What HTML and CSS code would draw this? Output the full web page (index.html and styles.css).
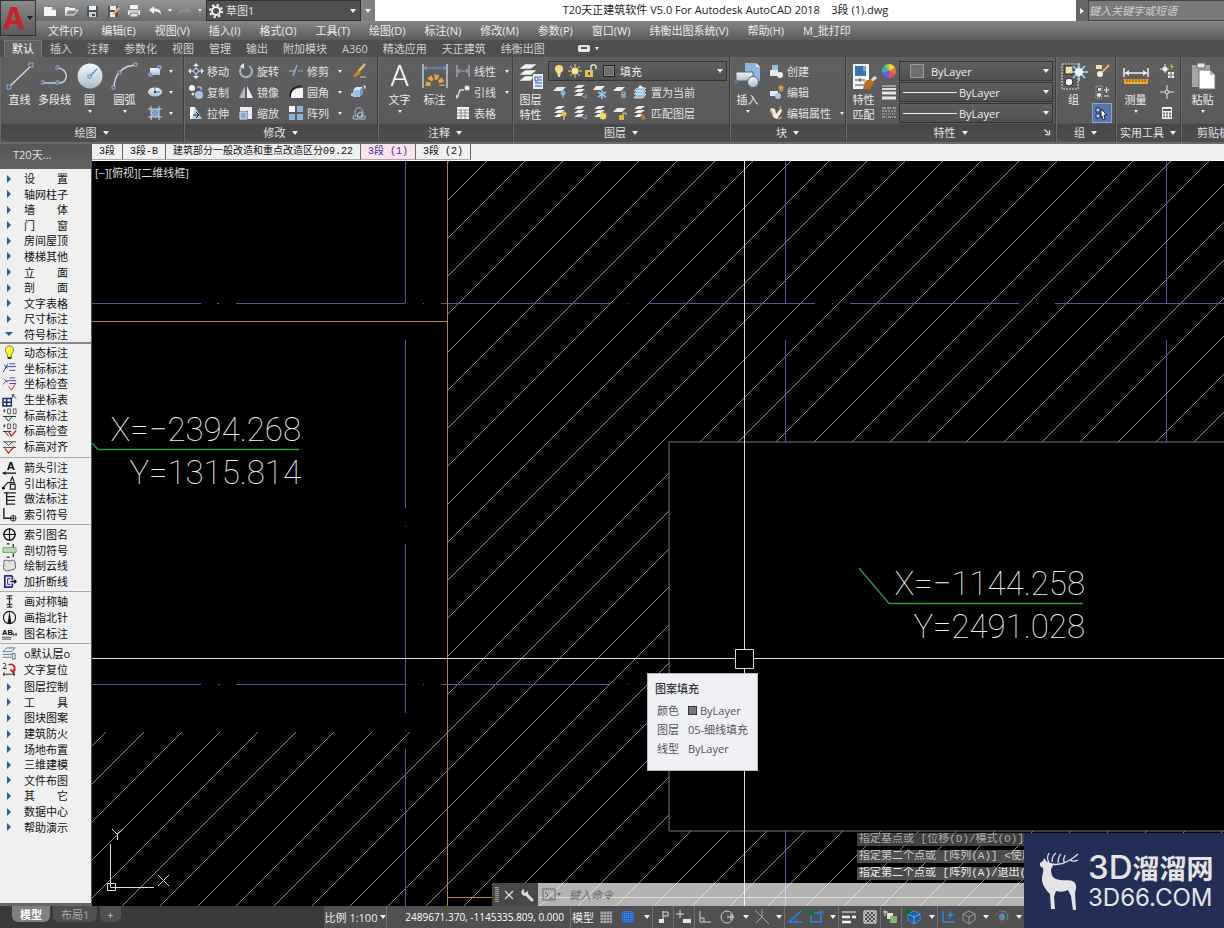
FILE: index.html
```html
<!DOCTYPE html>
<html lang="zh-CN">
<head>
<meta charset="utf-8">
<title>T20天正建筑软件 V5.0 For Autodesk AutoCAD 2018</title>
<link rel="stylesheet" href="styles.css">
</head>
<body>
<svg class="defs" aria-hidden="true">
  <defs>
    <linearGradient id="gb" x1="0" y1="0" x2="0" y2="1"><stop offset="0" stop-color="#f4f8fb"/><stop offset="1" stop-color="#a9bccd"/></linearGradient>
    <symbol id="new" viewBox="0 0 16 16"><path d="M2 4h8l4 3v6H2z" fill="#f3f3f3"/><path d="M10 4v3h4z" fill="#9b9b9b"/></symbol>
    <symbol id="open" viewBox="0 0 16 16"><path d="M2 12V4h4l1 1h5v2H5z" fill="#eee"/><path d="M2 12l3-5h10l-4 5z" fill="#7c8a92" stroke="#eee"/></symbol>
    <symbol id="save" viewBox="0 0 16 16"><path d="M3 3h11v11H3z" fill="#4d565e"/><path d="M5 3h7v4H5z" fill="#f4f4f4"/><path d="M5 9h7v5H5z" fill="#c6d0d8"/><path d="M8 11h3v2H8z" fill="#38424a"/></symbol>
    <symbol id="saveas" viewBox="0 0 16 16"><path d="M3 3h10v11H3z" fill="#4d565e"/><path d="M5 3h6v4H5zM5 9h5v5H5z" fill="#eee"/><path d="M7 11l6-7 2 2-6 6z" fill="#e6ad62"/></symbol>
    <symbol id="print" viewBox="0 0 16 16"><path d="M4 2h8v4H4zM2 7h12v5H2z" fill="#f5f5f5"/><path d="M4 10h8v4H4z" fill="#dce3e8" stroke="#69727a"/><path d="M1 8h14" stroke="#aaa"/></symbol>
    <symbol id="undo" viewBox="0 0 16 16"><path d="M2 7l5-4v2.500c5 0 7 2 7 6-2-3-4-3-7-3V11z" fill="#f0f0f0"/></symbol>
    <symbol id="redo" viewBox="0 0 16 16"><path d="M14 7L9 3v2.500c-5 0-7 2-7 6 2-3 4-3 7-3V11z" fill="#8e8e8e"/></symbol>
    <symbol id="gear" viewBox="0 0 16 16"><circle cx="8" cy="8" r="4" fill="none" stroke="#f2f2f2" stroke-width="2"/><circle cx="8" cy="8" r="6" fill="none" stroke="#f2f2f2" stroke-width="2" stroke-dasharray="2.300 2.400"/></symbol>

    <symbol id="line" viewBox="0 0 28 28"><path d="M3 25L26 3" stroke="#d5d5d5" stroke-width="1.500"/><path d="M1 23h4v4H1zM23 1h4v4h-4z" fill="#4b5d73" stroke="#8ab4e0"/></symbol>
    <symbol id="pline" viewBox="0 0 28 28"><path d="M2 21h16c10 0 10-15-2-15" stroke="#c9ced4" fill="none" stroke-width="1.500"/><path d="M0 19h3v3H0zM15 19h3v3h-3zM15 4h3v3h-3z" fill="#4b5d73" stroke="#8ab4e0"/></symbol>
    <symbol id="circle" viewBox="0 0 28 28"><circle cx="14" cy="14" r="12.500" fill="url(#gb)"/><path d="M14 14l7-7" stroke="#5d8dc0" stroke-width="1.500"/><path d="M12 13h3v3h-3z" fill="#cfe2f5" stroke="#5d8dc0"/></symbol>
    <symbol id="arc" viewBox="0 0 28 28"><path d="M3 26C3 12 12 3 26 3" stroke="#d5d5d5" fill="none" stroke-width="1.500"/><path d="M1 24h3v3H1zM7 9h3v3H7zM23 1h3v3h-3z" fill="#4b5d73" stroke="#8ab4e0"/></symbol>
    <symbol id="rect" viewBox="0 0 16 16"><path d="M3 5h10v7H3z" fill="url(#gb)"/><path d="M11 3h3v3h-3zM2 10h3v3H2z" fill="#4d6f97" stroke="#9cc3ec"/></symbol>
    <symbol id="ellipse" viewBox="0 0 16 16"><ellipse cx="8" cy="8" rx="7" ry="4.500" fill="url(#gb)"/><path d="M8 8V2M8 8h5" stroke="#4d6f97"/><path d="M7 7h2v2H7z" fill="#27486e"/></symbol>
    <symbol id="hatch" viewBox="0 0 16 16"><path d="M4 4h8v8H4z" fill="#6c94c3"/><path d="M4 1v14M12 1v14M1 4h14M1 12h14" stroke="#c6d8eb"/><path d="M4 12l8-8M4 8l4-4M8 12l4-4" stroke="#cfe2f5" stroke-width=".6"/></symbol>
    <symbol id="move" viewBox="0 0 16 16"><path d="M8 0l3 3H5zM8 16l3-3H5zM0 8l3-3v6zM16 8l-3-3v6z" fill="#e4e9ee"/><path d="M8 3v10M3 8h10" stroke="#e4e9ee"/><path d="M6 6h4v4H6z" fill="#3d5068" stroke="#a8c9ec"/></symbol>
    <symbol id="copy" viewBox="0 0 16 16"><circle cx="4" cy="4" r="3" fill="#f2f2f2"/><circle cx="11" cy="11" r="4" fill="#a8c4e0"/><path d="M9 3h4v3" stroke="#ddd" fill="none"/><circle cx="5" cy="10" r="1.500" fill="#ddd"/></symbol>
    <symbol id="stretch" viewBox="0 0 16 16"><path d="M2 2h5v12H2z" fill="#fff"/><path d="M7 2l7 12H4z" fill="#b3cbe2"/><path d="M5 10h6M8 7l3 3-3 3" stroke="#222" fill="none"/></symbol>
    <symbol id="rotate" viewBox="0 0 16 16"><path d="M5 3a6 6 0 1 0 6 0" stroke="#9fb4c9" fill="none" stroke-width="2"/><path d="M6 0v6L2 3z" fill="#dce6ef"/></symbol>
    <symbol id="mirror" viewBox="0 0 16 16"><path d="M7 2v12H1z" fill="#aab9c9"/><path d="M9 2v12h6z" fill="#e9eef3"/></symbol>
    <symbol id="scale" viewBox="0 0 16 16"><path d="M2 2h12v12h-4V6H2z" fill="#e8edf3"/><path d="M2 7h7v7H2z" fill="#83a8d2" stroke="#dfe8f2"/></symbol>
    <symbol id="trim" viewBox="0 0 16 16"><path d="M1 8h6M10 8h2M13 8h2" stroke="#aebdcc"/><path d="M5 13L9 2" stroke="#8fb1d8" stroke-width="1.500"/></symbol>
    <symbol id="fillet" viewBox="0 0 16 16"><path d="M3 14V12Q3 4 13 4H15V14z" fill="#f3f5f7"/><path d="M2 13Q2 3 13 2" stroke="#151a20" stroke-width="1.500" fill="none"/></symbol>
    <symbol id="array" viewBox="0 0 16 16"><path d="M1 1h6v6H1z" fill="#f3f6f9"/><path d="M9 1h6v6H9zM1 9h6v6H1zM9 9h6v6H9z" fill="#8fb4dc"/></symbol>
    <symbol id="erase" viewBox="0 0 16 16"><path d="M14 1L7 9" stroke="#e8b45c" stroke-width="2.500"/><path d="M7 7l3 3-5 4-3-1z" fill="#db7d23"/><path d="M9 14h6" stroke="#e9c9a3"/></symbol>
    <symbol id="explode" viewBox="0 0 16 16"><path d="M2 6h7v7H2z" fill="#9dbfe0"/><path d="M2 6l3-3h7L9 6z" fill="#d6e5f4"/><path d="M9 6l3-3v7l-3 3z" fill="#6f9ac8"/><path d="M12 1l3 1-1 4zM0 9h2v3H0z" fill="#b9d2eb"/></symbol>
    <symbol id="offset" viewBox="0 0 16 16"><path d="M2 14h12v-3h-3c3-5-1-9-4-8-3 0-4 5-2 8H2z" stroke="#a6c3e2" fill="none"/><path d="M6 12h5V9c1-2-3-3-4 0z" stroke="#dce8f5" fill="none"/></symbol>
    <symbol id="dim" viewBox="0 0 28 28"><path d="M2 2v24M26 2v24" stroke="#c6cbd1" stroke-width="1.500"/><path d="M3 6h22M6 4L3 6l3 2M22 4l3 2-3 2" stroke="#6aa0dc" fill="none"/><path d="M7 24c0-12 14-12 14 0" fill="none" stroke="#e2a647" stroke-width="5" stroke-dasharray="4 2"/></symbol>
    <symbol id="dimlin" viewBox="0 0 16 16"><path d="M2 2v12M14 2v12" stroke="#c6cbd1"/><path d="M3 8h10M5 6L3 8l2 2M11 6l2 2-2 2" stroke="#7fb0e6" fill="none"/></symbol>
    <symbol id="leader" viewBox="0 0 16 16"><path d="M2 14L5 6h4" stroke="#d9d9d9" fill="none" stroke-width="1.500"/><path d="M1 15l0-4 3 1z" fill="#ddd"/><circle cx="12" cy="4" r="2.500" fill="#eef2f6"/></symbol>
    <symbol id="table" viewBox="0 0 16 16"><path d="M2 2h12v12H2z" fill="#f5f5f5"/><path d="M2 5h12M2 8h12M2 11h12M6 5v9M10 5v9" stroke="#8b8f94"/></symbol>
    <symbol id="layers" viewBox="0 0 28 28"><path d="M8 2h12l-6 5H2zM8 8h12l-6 5H2zM8 14h9l-3 5H2z" fill="#f2f2f2" stroke="#555" stroke-width=".5"/><path d="M16 12h10v15H16z" fill="#e7f0fa"/><path d="M18 15h3v4h-3zM22 15h3M22 18h3M18 21h7M18 24h7" stroke="#2c5b99" fill="none"/></symbol>
    <symbol id="bulb" viewBox="0 0 16 16"><circle cx="8" cy="6" r="4" fill="#f5dc7c"/><path d="M6 9h4l-1 5H7z" fill="#ead9a3"/></symbol>
    <symbol id="sun" viewBox="0 0 16 16"><circle cx="8" cy="8" r="3.500" fill="#fbe795"/><path d="M8 1v3M8 12v3M1 8h3M12 8h3M3 3l2 2M11 11l2 2M13 3l-2 2M3 13l2-2" stroke="#e8cf90"/></symbol>
    <symbol id="lock" viewBox="0 0 16 16"><path d="M2 7h8v7H2z" fill="#e6c25c"/><path d="M8 7V4c0-3 5-3 5 0v2" stroke="#ddd" fill="none" stroke-width="1.500"/><path d="M5 9h2v3H5z" fill="#6d5a20"/></symbol>
    <symbol id="lay1" viewBox="0 0 16 16"><path d="M5 3h9l-4 4H1z" fill="#ececec"/><circle cx="11" cy="9" r="2.500" fill="#80b4ea"/><path d="M11 11v3" stroke="#bcd"/></symbol>
    <symbol id="lay2" viewBox="0 0 16 16"><path d="M6 1h7l-4 3H2zM6 5h7l-4 3H2zM6 9h6l-3 3H2z" fill="#e6ebf0"/><path d="M10 12l4 2M14 10v4" stroke="#7fb0e6"/></symbol>
    <symbol id="lay3" viewBox="0 0 16 16"><path d="M4 2h9l-4 4H1z" fill="#ececec"/><path d="M10 6v9M6 8l8 5M14 8l-8 5" stroke="#94c6f5" stroke-width="1.500"/></symbol>
    <symbol id="lay4" viewBox="0 0 16 16"><path d="M5 3h8l-4 4H1z" fill="#ececec"/><path d="M9 10h5v4H9z" fill="#7aa7a0"/><path d="M10 10V8h3v2" stroke="#a7c9c3" fill="none"/></symbol>
    <symbol id="lay5" viewBox="0 0 16 16"><path d="M5 4h9l-3 3H2zM5 7h9l-3 3H2zM5 10h9l-3 4H2z" fill="#8fb8e2" stroke="#e9f1fa" stroke-width=".7"/><path d="M8 1l4 3H6z" fill="#e9f1fa"/></symbol>
    <symbol id="lay6" viewBox="0 0 16 16"><path d="M6 1h7l-4 3H2zM6 5h7l-4 3H2zM6 9h5l-3 3H2z" fill="#eee"/><circle cx="12" cy="9" r="2.500" fill="#edbd56"/><path d="M12 11v4" stroke="#eddcb0"/></symbol>
    <symbol id="lay7" viewBox="0 0 16 16"><path d="M6 1h7l-4 3H2zM6 5h7l-4 3H2zM6 9h5l-3 3H2z" fill="#eee"/><circle cx="11" cy="11" r="3" fill="#f2de62"/><path d="M11 7v8M7 11h8M8 8l6 6M14 8l-6 6" stroke="#f2de62"/></symbol>
    <symbol id="lay8" viewBox="0 0 16 16"><path d="M5 3h9l-4 4H1z" fill="#ececec"/><path d="M7 10h5v5H7z" fill="#e3b148"/><path d="M11 10V8h3v2" stroke="#e9d39a" fill="none"/></symbol>
    <symbol id="lay9" viewBox="0 0 16 16"><path d="M6 1h7l-4 3H2zM6 5h7l-4 3H2zM6 9h5l-3 3H2z" fill="#eee"/><path d="M9 9l3 1 2 4-4 1z" fill="#c9762c"/></symbol>
    <symbol id="insert" viewBox="0 0 28 28"><path d="M11 1h11l4 4v14H11z" fill="#8fb6df"/><path d="M22 1v4h4z" fill="#e3eefa"/><path d="M2 10h17v9H2z" fill="url(#gb)" stroke="#55606c"/><circle cx="19" cy="20" r="5.500" fill="url(#gb)" stroke="#55606c"/><path d="M0 18h4v4H0z" fill="#4e77a8"/></symbol>
    <symbol id="create" viewBox="0 0 16 16"><path d="M4 2h6v7H4z" fill="#9cbde0"/><path d="M2 7h8v6H2z" fill="#e6ebf0"/><circle cx="12" cy="12" r="3" fill="#eaf1f8"/></symbol>
    <symbol id="edit" viewBox="0 0 16 16"><path d="M2 7h8v5H2z" fill="#e6ebf0"/><circle cx="10" cy="12" r="3" fill="#a8c6e6"/><path d="M13 1v7M10 4h6M11 2l4 5M15 2l-4 5" stroke="#f0b050"/></symbol>
    <symbol id="attr" viewBox="0 0 16 16"><path d="M3 3l4 1 1 5 5-6 1 3-5 8-3-1-4-7z" fill="#f1eadb"/><path d="M2 4l3 6M10 14l4-2M11 3l2-1" stroke="#cf9d4d" stroke-width="1.500"/></symbol>
    <symbol id="match" viewBox="0 0 28 28"><path d="M3 2h16v25H3z" fill="#f1f5f9"/><path d="M5 4h11v10H5z" fill="#3776ad"/><path d="M13 4h3v5h-3z" fill="#74a8d3"/><path d="M5 18h10M10 16v4M5 23h9" stroke="#44484d"/><path d="M26 15l-5 4" stroke="#ddd" stroke-width="3"/><path d="M15 19l6-2 3 4-4 6-7 0z" fill="#b96c28"/></symbol>
    <symbol id="wheel" viewBox="0 0 16 16"><path d="M8 8V1a7 7 0 0 1 6 4z" fill="#ffcf39"/><path d="M8 8l6-3a7 7 0 0 1 0 7z" fill="#e87637"/><path d="M8 8l6 4a7 7 0 0 1-7 3z" fill="#d94a88"/><path d="M8 8l-1 7a7 7 0 0 1-6-5z" fill="#5b65cf"/><path d="M8 8l-7 2a7 7 0 0 1 2-7z" fill="#3ea6d4"/><path d="M8 8L3 3a7 7 0 0 1 5-2z" fill="#83cf55"/></symbol>
    <symbol id="weights" viewBox="0 0 16 16"><path d="M1 2h14" stroke="#ddd"/><path d="M1 5h14" stroke="#ddd" stroke-width="2"/><path d="M1 9h14M1 14h14" stroke="#e6e6e6" stroke-width="3"/></symbol>
    <symbol id="ltypes" viewBox="0 0 16 16"><path d="M1 3h14" stroke="#ccc" stroke-dasharray="4 1"/><path d="M1 6h14" stroke="#ccc" stroke-dasharray="2 1"/><path d="M1 9h14" stroke="#ccc" stroke-dasharray="1 1"/><path d="M1 12h14" stroke="#ccc" stroke-dasharray="3 1 1 1"/></symbol>
    <symbol id="group" viewBox="0 0 28 28"><path d="M2 2h16v25H2z" fill="none" stroke="#ddd" stroke-dasharray="2 1"/><path d="M5 4h8v8H5z" fill="#f0e39c" stroke="#222"/><circle cx="9" cy="20" r="4" fill="#f5f5f5" stroke="#222"/><path d="M19 1v18M10 10h18M13 4l12 12M25 4L13 16" stroke="#a9dcf5" stroke-width="1.500"/><circle cx="19" cy="10" r="4" fill="#eafaff"/></symbol>
    <symbol id="ungroup" viewBox="0 0 16 16"><path d="M2 2h6v4H2z" fill="#f2e3a6"/><circle cx="6" cy="11" r="3" fill="#eee"/><path d="M15 2L8 9" stroke="#e7ae62" stroke-width="2"/></symbol>
    <symbol id="gedit" viewBox="0 0 16 16"><path d="M2 2h6v12H2z" fill="none" stroke="#bbb" stroke-dasharray="1 1"/><path d="M4 4h3v3H4z" fill="#cfe0f0"/><circle cx="5" cy="11" r="2" fill="#eee"/><path d="M10 6h5M12.500 3v6M10 12h5" stroke="#e8e8e8"/></symbol>
    <symbol id="gsel" viewBox="0 0 16 16"><path d="M2 3h4v4H2zM2 9h4v4H2z" fill="#bcd0f0" stroke="#1b2c4c"/><path d="M7 4l6 6H10l1 4-2 1-1-4-1 1z" fill="#fff" stroke="#223"/></symbol>
    <symbol id="measure" viewBox="0 0 28 28"><path d="M2 6v9M26 6v9M3 11h22" stroke="#f0f0f0" stroke-width="1.500"/><path d="M7 8l-4 3 4 3zM21 8l4 3-4 3z" fill="#f0f0f0"/><path d="M2 17h24v5H2z" fill="#e5a92d"/><path d="M5 17v3M8 17v3M11 17v3M14 17v3M17 17v3M20 17v3M23 17v3" stroke="#7c5a12"/></symbol>
    <symbol id="qsel" viewBox="0 0 16 16"><path d="M1 6h9M6 1v9" stroke="#ddd"/><circle cx="6" cy="6" r="2.500" fill="#eee"/><path d="M13 0l-2 4h2l-1 3 3-4h-2z" fill="#f0b050"/><path d="M9 9h6v6H9z" fill="#eee"/><path d="M9 12h6M12 9v6" stroke="#666"/></symbol>
    <symbol id="point" viewBox="0 0 16 16"><path d="M8 1v14M1 8h14" stroke="#ddd"/><circle cx="8" cy="8" r="2" fill="#6a6a6a" stroke="#ddd"/></symbol>
    <symbol id="calc" viewBox="0 0 16 16"><path d="M3 2h10v12H3z" fill="#f0f0f0"/><path d="M4 4h8v2H4z" fill="#555"/><path d="M4 8.500h8M4 11.500h8" stroke="#777" stroke-width="2" stroke-dasharray="2 1"/></symbol>
    <symbol id="paste" viewBox="0 0 28 28"><path d="M3 3h18v22H3z" fill="#a5a5a5"/><path d="M8 1h8v5H8z" fill="#e6e6e6" stroke="#666"/><path d="M10 8h11l5 5v14H10z" fill="#fff" stroke="#777"/><path d="M21 8v5h5z" fill="#b4b4b4"/></symbol>

    <symbol id="t-bulb" viewBox="0 0 16 16"><path d="M6 10C2 6 4 1 8 1s6 5 2 9v3H6z" fill="#ffff3c" stroke="#777700"/><path d="M6 13h4v2H6z" fill="#333"/></symbol>
    <symbol id="t-coord" viewBox="0 0 16 16"><path d="M1 12l4-6h10M2 4l4 4M6 3L3 9M8 3h6M8 10h6" stroke="#3e3e9e" fill="none"/></symbol>
    <symbol id="t-coordc" viewBox="0 0 16 16"><path d="M1 9l4-4h10M2 3l4 4M8 2h6M8 8h6" stroke="#3e3e9e" fill="none"/><path d="M7 11l3 4 5-8" stroke="#d22" fill="none"/></symbol>
    <symbol id="t-coordt" viewBox="0 0 16 16"><path d="M1 7h9v8H1zM1 11h9M5 7v8" stroke="#12306e" fill="none" stroke-width="1.500"/><path d="M10 7l3-5M10 2l5 5" stroke="#222"/></symbol>
    <symbol id="t-elev" viewBox="0 0 16 16"><path d="M1 3h3M2.500 1v4M6 1h3v5H6zM12 1h3v5h-3z" stroke="#333" fill="none" stroke-width=".8"/><path d="M1 9h14M3 9l4 5 4-5" stroke="#222" fill="none"/></symbol>
    <symbol id="t-elevc" viewBox="0 0 16 16"><path d="M1 3h3M2.500 1v4M6 1h3v5H6zM12 1h3v5h-3z" stroke="#333" fill="none" stroke-width=".8"/><path d="M1 9h9M3 9l4 5" stroke="#222" fill="none"/><path d="M7 9l3 5 5-6" stroke="#d22" fill="none" stroke-width="1.500"/></symbol>
    <symbol id="t-align" viewBox="0 0 16 16"><path d="M1 3h14M1 9h14M3 3l4 4 4-4" stroke="#444" fill="none"/><path d="M3 10l4 5 6-7" stroke="#c22" fill="none" stroke-width="1.300"/></symbol>
    <symbol id="t-under" viewBox="0 0 16 16"><path d="M1 14h14" stroke="#222" stroke-width="1.500"/><path d="M4 12l-4 2 4 2z" fill="#222"/></symbol>
    <symbol id="t-lead" viewBox="0 0 16 16"><path d="M1 13l5-6h8M9 6l2-5 2 5M9 14V9h5v5z" stroke="#222" fill="none" stroke-width="1.300"/><circle cx="1.500" cy="13" r="1.500"/></symbol>
    <symbol id="t-method" viewBox="0 0 16 16"><path d="M5 1v14M2 2h13M5 6h9M5 10h9M5 14h9" stroke="#222" stroke-width="1.500"/></symbol>
    <symbol id="t-index" viewBox="0 0 16 16"><path d="M2 1v11h8" stroke="#222" fill="none" stroke-width="1.500"/><circle cx="12" cy="12" r="3" fill="none" stroke="#222"/><path d="M9 12h6M12 9v6" stroke="#222"/></symbol>
    <symbol id="t-idxname" viewBox="0 0 16 16"><circle cx="8" cy="8" r="6" fill="none" stroke="#111" stroke-width="1.500"/><path d="M1 8h14M8 1v14" stroke="#111" stroke-width="1.300"/></symbol>
    <symbol id="t-section" viewBox="0 0 16 16"><path d="M5 1h3M12 1v4M5 15h3M12 11v4" stroke="#222" stroke-width="1.300"/><path d="M1 5h14v5H1z" fill="#b8dcae" stroke="#6e9a66"/></symbol>
    <symbol id="t-cloud" viewBox="0 0 16 16"><path d="M2 3c3-2 5 1 7 0s5-1 5 2 1 4 0 6-3 1-5 2-4 1-6 0-1-4-1-6 0-3 0-4z" fill="#e6e0e2" stroke="#555"/></symbol>
    <symbol id="t-break" viewBox="0 0 16 16"><path d="M11 2H3v12h8M11 2v4M11 10v4" stroke="#24249a" fill="none" stroke-width="1.800"/><path d="M6 5h3M6 5v6h3" stroke="#24249a" fill="none"/><path d="M9 8h6M13 6l2 2-2 2" stroke="#111" fill="none" stroke-width="1.500"/></symbol>
    <symbol id="t-sym" viewBox="0 0 16 16"><path d="M8 2v12M5 2h6M5 5h6M5 11h6M5 14h6" stroke="#333" stroke-width="1.300"/></symbol>
    <symbol id="t-north" viewBox="0 0 16 16"><circle cx="8" cy="8" r="6.500" fill="none" stroke="#111" stroke-width="1.200"/><path d="M8 1l2 13H6z" fill="#111"/></symbol>
    <symbol id="t-rule" viewBox="0 0 16 16"><path d="M0 12h10M0 14h10M12 9h4M12 7v4M15 7v4" stroke="#222" stroke-width=".8"/></symbol>
    <symbol id="t-layer" viewBox="0 0 16 16"><path d="M5 2h9l-4 4H1zM1 9h9l2-2M1 12h9M11 8h3v6h-3z" stroke="#5b7786" fill="#e8eef0"/></symbol>
    <symbol id="t-reset" viewBox="0 0 16 16"><path d="M1 2c3-2 4 1 2 3L1 7h4" stroke="#222" fill="none"/><path d="M7 3c6-2 8 3 5 7M9 8l3 3 2-4" stroke="#d11f2a" fill="none" stroke-width="2"/><path d="M1 13h13M2 11v4M13 11v4" stroke="#222"/></symbol>

    <symbol id="s-grid" viewBox="0 0 16 16"><path d="M4 2v12M7 2v12M10 2v12M13 2v12M2 4h12M2 7h12M2 10h12M2 13h12" stroke="#d6d6d6" stroke-width=".8"/></symbol>
    <symbol id="s-snap" viewBox="0 0 16 16"><path d="M2 2h12v12H2z" fill="#2465c8"/><path d="M5 2v12M8 2v12M11 2v12M2 5h12M2 8h12M2 11h12" stroke="#5f92d9" stroke-dasharray="1 1"/></symbol>
    <symbol id="s-infer" viewBox="0 0 16 16"><path d="M8 2v9M8 3h5v4H8" stroke="#ddd" fill="none"/><path d="M4 10h5v4H4z" fill="#e5e5e5"/></symbol>
    <symbol id="s-dyn" viewBox="0 0 16 16"><path d="M4 1v8M0 5h8" stroke="#ddd"/><path d="M7 10h8v4H7z" fill="#e5e5e5"/></symbol>
    <symbol id="s-ortho" viewBox="0 0 16 16"><path d="M3 2v11h11M3 9h4v4" stroke="#d0d0d0" fill="none"/></symbol>
    <symbol id="s-polar" viewBox="0 0 16 16"><circle cx="8" cy="8" r="6" fill="none" stroke="#d0d0d0"/><path d="M8 8h7M12 5v6" stroke="#ddd"/></symbol>
    <symbol id="s-iso" viewBox="0 0 16 16"><path d="M1 1l14 14M8 0v8l-6 6" stroke="#aaa" fill="none"/></symbol>
    <symbol id="s-track" viewBox="0 0 16 16"><path d="M14 2L2 13h13" stroke="#2b86e8" fill="none" stroke-width="1.500"/><path d="M9 9v4" stroke="#2b86e8"/></symbol>
    <symbol id="s-osnap" viewBox="0 0 16 16"><path d="M3 4h10v9H3z" fill="none" stroke="#2b86e8" stroke-width="1.500"/><path d="M1 1h5v5H1z" fill="#157235"/><path d="M11 2h4v3" stroke="#2b86e8" fill="none"/></symbol>
    <symbol id="s-lw" viewBox="0 0 16 16"><path d="M1 3h14" stroke="#eee"/><path d="M1 8h8M11 8h4M1 13h9" stroke="#eee" stroke-width="2.500"/></symbol>
    <symbol id="s-trans" viewBox="0 0 16 16"><path d="M2 2h12v12H2z" fill="#4a4a4a" stroke="#eee"/><path d="M2 6l4-4M2 10l8-8M2 14L14 2M6 14l8-8M10 14l4-4M2 10l4 4M2 6l8 8M2 2l12 12M6 2l8 8M10 2l4 4" stroke="#d8d8d8" stroke-width=".8"/></symbol>
    <symbol id="s-cycle" viewBox="0 0 16 16"><path d="M2 1v6M0 3h5" stroke="#ddd"/><path d="M4 4h6v6H4z" fill="#dfe8d0"/><path d="M7 7h7v7H7z" fill="#8db56c"/></symbol>
    <symbol id="s-3d" viewBox="0 0 16 16"><path d="M3 5l6-3 6 3v6l-6 4-6-4z" fill="#1d5ba8" stroke="#3d8ada"/><path d="M3 5l6 3 6-3M9 8v7" stroke="#6db2ee" fill="none"/><path d="M0 0h5v5H0z" fill="#0d6b2c"/></symbol>
    <symbol id="s-ucs" viewBox="0 0 16 16"><path d="M3 2v11h12" stroke="#2b86e8" fill="none" stroke-width="1.500"/><path d="M12 1L7 7h3l-2 4 6-6h-3z" fill="#2b86e8"/></symbol>
    <symbol id="s-cube" viewBox="0 0 16 16"><path d="M2 5l6-3 6 3v6l-6 4-6-4zM2 5l6 3 6-3M8 8v7" stroke="#9b9b9b" fill="none"/></symbol>
    <symbol id="s-giz" viewBox="0 0 16 16"><circle cx="8" cy="8" r="6" fill="none" stroke="#b44" stroke-dasharray="12 7"/><path d="M8 2a6 6 0 0 1 5 9" stroke="#4a8" fill="none"/><path d="M5 6l3-2 3 2v4l-3 2-3-2z" fill="#5a8ab0"/></symbol>
  </defs>
</svg>

<header class="top">
  <div class="caption">
    <button class="app" aria-label="应用程序菜单"><span class="app-mark">A</span><i class="caret dark"></i></button>
    <div class="caption-rows">
      <div class="titlebar">
        <div class="qat">
          <button aria-label="新建"><svg><use href="#new"/></svg></button>
          <button aria-label="打开"><svg><use href="#open"/></svg></button>
          <button aria-label="保存"><svg><use href="#save"/></svg></button>
          <button aria-label="另存为"><svg><use href="#saveas"/></svg></button>
          <button aria-label="打印"><svg><use href="#print"/></svg></button>
          <button class="wide" aria-label="放弃"><svg><use href="#undo"/></svg><i class="caret small"></i></button>
          <button class="wide" aria-label="重做"><svg><use href="#redo"/></svg><i class="caret small"></i></button>
        </div>
        <div class="workspace-pick">
          <svg><use href="#gear"/></svg>
          <select aria-label="工作空间"><option>草图1</option></select><i class="caret"></i>
        </div>
        <button class="qat-more" aria-label="自定义"><i class="caret"></i></button>
        <h1>T20天正建筑软件 V5.0 For Autodesk AutoCAD 2018&nbsp;&nbsp;&nbsp; 3段 (1).dwg</h1>
        <button class="search-toggle" aria-label="展开"><i class="caret right"></i></button>
        <input class="search" type="text" placeholder="键入关键字或短语" aria-label="搜索">
      </div>
      <nav class="menubar">
        <button>文件(F)</button><button>编辑(E)</button><button>视图(V)</button><button>插入(I)</button><button>格式(O)</button><button>工具(T)</button><button>绘图(D)</button><button>标注(N)</button><button>修改(M)</button><button>参数(P)</button><button>窗口(W)</button><button>纬衡出图系统(V)</button><button>帮助(H)</button><button>M_批打印</button>
      </nav>
    </div>
  </div>
  <nav class="tabs">
    <button class="on">默认</button><button>插入</button><button>注释</button><button>参数化</button><button>视图</button><button>管理</button><button>输出</button><button>附加模块</button><button>A360</button><button>精选应用</button><button>天正建筑</button><button>纬衡出图</button>
    <button class="tab-min" aria-label="最小化功能区"><span class="pill"></span><i class="caret small"></i></button>
  </nav>

  <div class="ribbon">
    <section class="panel p-draw">
      <div class="body">
        <button class="big"><svg><use href="#line"/></svg>直线</button>
        <button class="big"><svg><use href="#pline"/></svg>多段线</button>
        <button class="big"><svg><use href="#circle"/></svg>圆<i class="caret small"></i></button>
        <button class="big"><svg><use href="#arc"/></svg>圆弧<i class="caret small"></i></button>
        <div class="col">
          <button class="sm" aria-label="矩形"><svg><use href="#rect"/></svg><i class="caret small"></i></button>
          <button class="sm" aria-label="椭圆"><svg><use href="#ellipse"/></svg><i class="caret small"></i></button>
          <button class="sm" aria-label="图案填充"><svg><use href="#hatch"/></svg><i class="caret small"></i></button>
        </div>
      </div>
      <h2>绘图<i class="caret"></i></h2>
    </section>
    <section class="panel p-modify">
      <div class="body">
        <div class="col">
          <button class="sm"><svg><use href="#move"/></svg>移动</button>
          <button class="sm"><svg><use href="#copy"/></svg>复制</button>
          <button class="sm"><svg><use href="#stretch"/></svg>拉伸</button>
        </div>
        <div class="col">
          <button class="sm"><svg><use href="#rotate"/></svg>旋转</button>
          <button class="sm"><svg><use href="#mirror"/></svg>镜像</button>
          <button class="sm"><svg><use href="#scale"/></svg>缩放</button>
        </div>
        <div class="col">
          <button class="sm"><svg><use href="#trim"/></svg>修剪<i class="caret small"></i></button>
          <button class="sm"><svg><use href="#fillet"/></svg>圆角<i class="caret small"></i></button>
          <button class="sm"><svg><use href="#array"/></svg>阵列<i class="caret small"></i></button>
        </div>
        <div class="col">
          <button class="sm" aria-label="删除"><svg><use href="#erase"/></svg></button>
          <button class="sm" aria-label="分解"><svg><use href="#explode"/></svg></button>
          <button class="sm" aria-label="偏移"><svg><use href="#offset"/></svg></button>
        </div>
      </div>
      <h2>修改<i class="caret"></i></h2>
    </section>
    <section class="panel p-anno">
      <div class="body">
        <button class="big"><span class="letter">A</span>文字<i class="caret small"></i></button>
        <button class="big"><svg><use href="#dim"/></svg>标注</button>
        <div class="col">
          <button class="sm"><svg><use href="#dimlin"/></svg>线性<i class="caret small"></i></button>
          <button class="sm"><svg><use href="#leader"/></svg>引线<i class="caret small"></i></button>
          <button class="sm"><svg><use href="#table"/></svg>表格</button>
        </div>
      </div>
      <h2>注释<i class="caret"></i></h2>
    </section>
    <section class="panel p-layer">
      <div class="body">
        <button class="big"><svg><use href="#layers"/></svg>图层<br>特性</button>
        <div class="col grow">
          <div class="combo">
            <svg><use href="#bulb"/></svg><svg><use href="#sun"/></svg><svg><use href="#lock"/></svg><span class="swatch small-sw"></span>
            <select aria-label="图层"><option>填充</option></select><i class="caret"></i>
          </div>
          <div class="row">
            <button aria-label="关"><svg><use href="#lay1"/></svg></button><button aria-label="隔离"><svg><use href="#lay2"/></svg></button><button aria-label="冻结"><svg><use href="#lay3"/></svg></button><button aria-label="锁定"><svg><use href="#lay4"/></svg></button><button class="lbl"><svg><use href="#lay5"/></svg>置为当前</button>
          </div>
          <div class="row">
            <button aria-label="开"><svg><use href="#lay6"/></svg></button><button aria-label="取消隔离"><svg><use href="#lay2"/></svg></button><button aria-label="解冻"><svg><use href="#lay7"/></svg></button><button aria-label="解锁"><svg><use href="#lay8"/></svg></button><button class="lbl"><svg><use href="#lay9"/></svg>匹配图层</button>
          </div>
        </div>
      </div>
      <h2>图层<i class="caret"></i></h2>
    </section>
    <section class="panel p-block">
      <div class="body">
        <button class="big"><svg><use href="#insert"/></svg>插入<i class="caret small"></i></button>
        <div class="col">
          <button class="sm"><svg><use href="#create"/></svg>创建</button>
          <button class="sm"><svg><use href="#edit"/></svg>编辑</button>
          <button class="sm"><svg><use href="#attr"/></svg>编辑属性<i class="caret small"></i></button>
        </div>
      </div>
      <h2>块<i class="caret"></i></h2>
    </section>
    <section class="panel p-prop">
      <div class="body">
        <button class="big"><svg><use href="#match"/></svg>特性<br>匹配</button>
        <div class="col icons">
          <svg><use href="#wheel"/></svg><svg><use href="#weights"/></svg><svg><use href="#ltypes"/></svg>
        </div>
        <div class="col grow">
          <div class="combo c-color"><span class="swatch"></span><select aria-label="颜色"><option>ByLayer</option></select><i class="caret"></i></div>
          <div class="combo"><span class="rule"></span><select aria-label="线宽"><option>ByLayer</option></select><i class="caret"></i></div>
          <div class="combo"><span class="rule"></span><select aria-label="线型"><option>ByLayer</option></select><i class="caret"></i></div>
        </div>
      </div>
      <h2>特性<i class="caret"></i><button class="launch" aria-label="特性设置"><svg viewBox="0 0 16 16"><path d="M4 4l6 6M12 5v7H5" stroke="#ddd" stroke-width="2" fill="none"/></svg></button></h2>
    </section>
    <section class="panel p-group">
      <div class="body">
        <button class="big"><svg><use href="#group"/></svg>组</button>
        <div class="col">
          <button class="sm" aria-label="解除编组"><svg><use href="#ungroup"/></svg></button>
          <button class="sm" aria-label="组编辑"><svg><use href="#gedit"/></svg></button>
          <button class="sm active" aria-label="启用组选择"><svg><use href="#gsel"/></svg></button>
        </div>
      </div>
      <h2>组<i class="caret"></i></h2>
    </section>
    <section class="panel p-util">
      <div class="body">
        <button class="big"><svg><use href="#measure"/></svg>测量<i class="caret small"></i></button>
        <div class="col">
          <button class="sm" aria-label="快速选择"><svg><use href="#qsel"/></svg></button>
          <button class="sm" aria-label="点坐标"><svg><use href="#point"/></svg></button>
          <button class="sm" aria-label="计算器"><svg><use href="#calc"/></svg></button>
        </div>
      </div>
      <h2>实用工具<i class="caret"></i></h2>
    </section>
    <section class="panel p-clip">
      <div class="body">
        <button class="big"><svg><use href="#paste"/></svg>粘贴<i class="caret small"></i></button>
      </div>
      <h2>剪贴板</h2>
    </section>
  </div>
</header>

<main>
  <aside>
    <h2 class="side-title">T20天...</h2>
    <div class="side-body">
      <ul class="g11 tree">
        <li><button><b>设</b><b>置</b></button></li><li><button>轴网柱子</button></li><li><button><b>墙</b><b>体</b></button></li><li><button><b>门</b><b>窗</b></button></li><li><button>房间屋顶</button></li><li><button>楼梯其他</button></li><li><button><b>立</b><b>面</b></button></li><li><button><b>剖</b><b>面</b></button></li><li><button>文字表格</button></li><li><button>尺寸标注</button></li><li class="open"><button>符号标注</button></li>
      </ul>
      <ul class="g7 tools">
        <li><svg><use href="#t-bulb"/></svg><button>动态标注</button></li><li><svg><use href="#t-coord"/></svg><button>坐标标注</button></li><li><svg><use href="#t-coordc"/></svg><button>坐标检查</button></li><li><svg><use href="#t-coordt"/></svg><button>生坐标表</button></li><li><svg><use href="#t-elev"/></svg><button>标高标注</button></li><li><svg><use href="#t-elevc"/></svg><button>标高检查</button></li><li><svg><use href="#t-align"/></svg><button>标高对齐</button></li>
      </ul>
      <ul class="g4 tools">
        <li><svg viewBox="0 0 16 16"><use href="#t-under"/><text x="5" y="11" class="t-a">A</text></svg><button>箭头引注</button></li><li><svg><use href="#t-lead"/></svg><button>引出标注</button></li><li><svg><use href="#t-method"/></svg><button>做法标注</button></li><li><svg><use href="#t-index"/></svg><button>索引符号</button></li>
      </ul>
      <ul class="g4 tools">
        <li><svg><use href="#t-idxname"/></svg><button>索引图名</button></li><li><svg><use href="#t-section"/></svg><button>剖切符号</button></li><li><svg><use href="#t-cloud"/></svg><button>绘制云线</button></li><li><svg><use href="#t-break"/></svg><button>加折断线</button></li>
      </ul>
      <ul class="g3 tools">
        <li><svg><use href="#t-sym"/></svg><button>画对称轴</button></li><li><svg><use href="#t-north"/></svg><button>画指北针</button></li><li><svg viewBox="0 0 16 16"><use href="#t-rule"/><text x="0" y="10" class="t-ab">AB</text></svg><button>图名标注</button></li>
      </ul>
      <ul class="g2 tools">
        <li><svg><use href="#t-layer"/></svg><button>o默认层o</button></li><li><svg><use href="#t-reset"/></svg><button>文字复位</button></li>
      </ul>
      <ul class="g10 tree">
        <li><button>图层控制</button></li><li><button><b>工</b><b>具</b></button></li><li><button>图块图案</button></li><li><button>建筑防火</button></li><li><button>场地布置</button></li><li><button>三维建模</button></li><li><button>文件布图</button></li><li><button><b>其</b><b>它</b></button></li><li><button>数据中心</button></li><li><button>帮助演示</button></li>
      </ul>
    </div>
  </aside>
  <div class="work">
    <nav class="docs">
      <button>3段</button><button>3段-B</button><button>建筑部分一般改造和重点改造区分09.22</button><button class="on">3段 (1)</button><button>3段 (2)</button>
    </nav>
    <div class="canvas">
      <svg class="drawing" viewBox="92 161 1132 745" preserveAspectRatio="xMinYMin slice">
        <defs>
          <pattern id="hp" x="2" y="0" width="38" height="38" patternUnits="userSpaceOnUse"><path d="M-1 39L39 -1M-1 1L1 -1M37 39L39 37" stroke="#868686" stroke-width="1"/></pattern>
        </defs>
        <path d="M448 161H1224V442H669V831H1224V906H448z" fill="url(#hp)"/>
        <path d="M92 732H447V906H92z" fill="url(#hp)"/>
        <g class="axis">
          <path d="M92 303.500H201M236 303.500H405M441 303.500H610M648 303.500H815M850 303.500H1019M1055 303.500H1224M217 303.500h2M423 303.500h1M627 303.500h1M832 303.500h1M1037 303.500h1"/>
          <path d="M92 684.500H201M236 684.500H405M441 684.500H609M218 684.500h2M423 684.500h1M627 684.500h1"/>
          <path d="M405.500 161V303M405.500 340V508M405.500 526v1M405.500 544V713M405.500 730v1M405.500 749V906"/>
          <path d="M785.500 161V303M785.500 340V442M785.500 831V906M1166.500 161V303M1166.500 340V442"/>
        </g>
        <path d="M447.500 161V906M92 321.500H447M447 897.500H1224" stroke="#b08a3c" fill="none"/>
        <path d="M1224 442H669V831H1224" fill="none" stroke="#767676"/>
        <g class="green"><path d="M92 443L98 449.500H299"/><path d="M859 568L889 603.500H1083"/></g>
        <g class="coord">
          <text x="301" y="441">X=−2394.268</text><text x="301" y="484">Y=1315.814</text>
          <text x="1085" y="595">X=−1144.258</text><text x="1085" y="638">Y=2491.028</text>
        </g>
        <path class="ucs" d="M110.500 844V887.500H154M107.500 883.500h8v7h-8zM112 829l5 5 6-5M117.500 834v6M158 875l11 11M169 875l-11 11"/>
        <path d="M92 658.500H735M753 658.500H1224M744.500 161V649M744.500 668V906M735.500 649.500H753.500V668.500H735.500z" fill="none" stroke="#dcdcdc"/>
      </svg>
      <span class="view-label">[−][俯视][二维线框]</span>
      <div class="tip">
        <h3>图案填充</h3>
        <dl>
          <dt>颜色</dt><dd><span class="chip"></span>ByLayer</dd>
          <dt>图层</dt><dd>05-细线填充</dd>
          <dt>线型</dt><dd>ByLayer</dd>
        </dl>
      </div>
      <div class="history">
        <p class="old">指定基点或 [位移(D)/模式(O)]</p>
        <p>指定第二个点或 [阵列(A)] &lt;使用第一</p>
        <p class="now">指定第二个点或 [阵列(A)/退出(E)</p>
      </div>
      <div class="command">
        <div class="cmd-left">
          <span class="grip"></span>
          <svg viewBox="0 0 16 16"><path d="M4 4l8 8M12 4l-8 8" stroke="#d2d2d2" stroke-width="1.500"/></svg>
          <svg viewBox="0 0 16 16"><path d="M7 7l6 6" stroke="#ddd" stroke-width="3" stroke-linecap="round"/><path d="M5 2a3.500 3.500 0 1 0 4 5l0-3-3 2-1-1z" fill="#ddd"/></svg>
        </div>
        <svg class="prompt" viewBox="0 0 16 16"><path d="M2 2h12v11H2z" fill="none" stroke="#666"/><path d="M4 5l3 3-3 3M8 11h4" stroke="#555" fill="none"/></svg>
        <i class="caret small dark"></i>
        <input type="text" placeholder="键入命令" aria-label="命令">
      </div>
    </div>
  </div>
</main>

<footer>
  <nav class="layouts"><button class="on">模型</button><button>布局1</button><button class="plus">+</button></nav>
  <div class="status">
    <button class="w62">比例 1:100<i class="caret"></i></button>
    <span class="pos">2489671.370, -1145335.809, 0.000</span>
    <button class="w25">模型</button>
    <button class="w21" aria-label="栅格"><svg><use href="#s-grid"/></svg></button>
    <button class="w36" aria-label="捕捉"><svg><use href="#s-snap"/></svg><i class="caret"></i></button>
    <button class="w21 sep" aria-label="推断约束"><svg><use href="#s-infer"/></svg></button>
    <button class="w21 sep" aria-label="动态输入"><svg><use href="#s-dyn"/></svg></button>
    <button class="w21 sep" aria-label="正交"><svg><use href="#s-ortho"/></svg></button>
    <button class="w36" aria-label="极轴"><svg><use href="#s-polar"/></svg><i class="caret"></i></button>
    <button class="w33" aria-label="等轴测"><svg><use href="#s-iso"/></svg><i class="caret"></i></button>
    <button class="w21 sep" aria-label="追踪"><svg><use href="#s-track"/></svg></button>
    <button class="w33" aria-label="对象捕捉"><svg><use href="#s-osnap"/></svg><i class="caret"></i></button>
    <button class="w21 sep" aria-label="线宽"><svg><use href="#s-lw"/></svg></button>
    <button class="w21" aria-label="透明度"><svg><use href="#s-trans"/></svg></button>
    <button class="w21 sep" aria-label="选择循环"><svg><use href="#s-cycle"/></svg></button>
    <button class="w36 sep" aria-label="三维对象捕捉"><svg><use href="#s-3d"/></svg><i class="caret"></i></button>
    <button class="w21 sep" aria-label="动态UCS"><svg><use href="#s-ucs"/></svg></button>
    <button class="w33" aria-label="选择过滤"><svg><use href="#s-cube"/></svg><i class="caret"></i></button>
    <button class="w33" aria-label="小控件"><svg><use href="#s-giz"/></svg><i class="caret"></i></button>
  </div>
</footer>

<div class="brand">
  <svg viewBox="0 0 44 60" aria-hidden="true">
    <path d="M4 12l3-2 1-3 3 4 4 1 2 3-2 3c0 8 3 10 9 11 6 1 12-1 15 3 2 3 1 7 0 10l1 17h-3l-2-14-3-6c-4 2-8 2-12 1l-2 6 1 12h-4l-1-15c-5-5-8-10-8-15 0-4 2-7 1-11l-3-2z" fill="#e4e4e6"/>
    <path d="M13 12C11 8 11 5 13 2M15 13c5 1 12 0 17-3 4-2 7-4 10-7M16 11c0-4 1-7 4-9M22 12c0-4 1-7 3-9M28 11c-1-3 0-5 1-7M34 9c3 2 6 1 8 0" fill="none" stroke="#e4e4e6" stroke-width="1.300"/>
  </svg>
  <div><p class="b1">3D<span>溜溜网</span></p><p class="b2">3D66.COM</p></div>
</div>
</body>
</html>
```

FILE: styles.css
```css
* { box-sizing: border-box; }
body {
  margin: 0;
  height: 100vh;
  display: flex;
  flex-direction: column;
  overflow: hidden;
  position: relative;
  background: #3b3b3b;
  color: #e2e2e2;
  font: 11px/15px "Open Sans", "Noto Sans CJK SC", sans-serif;
}
h1, h2, h3, p, ul, dl, dd { margin: 0; padding: 0; font-weight: 400; }
ul { list-style: none; }
button, select, input {
  margin: 0;
  padding: 0;
  border: 0;
  border-radius: 0;
  background: none;
  color: inherit;
  font: inherit;
}
button { white-space: nowrap; }
select { appearance: none; }
svg { width: 16px; height: 16px; flex: none; }
.defs { position: absolute; width: 0; height: 0; }
.caret { flex: none; width: 0; height: 0; border: 3px solid transparent; border-top: 4px solid #eee; border-bottom: 0; }
.caret.small { border-width: 2px; border-top-width: 3px; border-bottom: 0; }
.caret.dark { border-top-color: #222; }
.caret.right { border: 3px solid transparent; border-left: 4px solid #eee; border-right: 0; }

/* caption */
.top { flex: none; border-bottom: 2px solid #6a6a6a; }
.caption { display: flex; height: 40px; background: linear-gradient(#5e5e5e 52%, #858585 53%, #5c5c5c); }
.app { width: 36px; height: 36px; flex: none; display: flex; align-items: center; justify-content: center; gap: 2px; border: 1px solid #333; background: linear-gradient(#8a8a8a, #5a5a5a); }
.app-mark { color: #c8242b; font: 700 30px/32px Inter, sans-serif; }
.caption-rows { flex: 1; min-width: 0; }
.titlebar { display: flex; height: 21px; background: #fff; }
.qat { width: 170px; display: flex; align-items: center; padding-left: 6px; gap: 5px; background: linear-gradient(#949494, #6a6a6a); }
.qat button { display: flex; align-items: center; }
.qat .wide { gap: 5px; }
.workspace-pick { width: 155px; display: flex; align-items: center; gap: 2px; padding: 0 4px 0 1px; background: #505050; border: 1px solid #2e2e2e; }
.workspace-pick select { flex: 1; min-width: 0; }
.qat-more { width: 14px; display: flex; align-items: center; justify-content: center; background: #808080; }
.qat-more .caret { border-top-color: #fff; }
.titlebar h1 { flex: 1; text-align: center; font-size: 11px; line-height: 20px; color: #222; white-space: nowrap; }
.search-toggle { width: 12px; display: flex; align-items: center; justify-content: center; background: #666; }
.search { width: 136px; background: #797979; border: 1px solid #444; border-right: 0; color: #ddd; font-style: italic; }
.search::placeholder { color: #d2d2d2; }
.menubar { display: flex; gap: 19px; height: 18px; padding-left: 12px; align-items: center; color: #ececec; }

/* ribbon tabs */
.tabs { display: flex; gap: 1px; height: 17px; background: #4f4f4f; padding-left: 4px; color: #cfcfcf; }
.tabs button { padding: 0 7px; line-height: 16px; }
.tabs .on { background: #626262; color: #fff; border: 1px solid #777; border-bottom: 0; }
.tabs .tab-min { display: flex; align-items: center; gap: 5px; margin-left: 18px; }
.pill { width: 12px; height: 7px; border-radius: 2px; background: #555; border: 3px solid #e8e8e8; border-top-width: 2px; }

/* ribbon */
.ribbon { display: flex; background: #5a5a5a; overflow: hidden; }
.panel { flex: none; display: flex; flex-direction: column; border-right: 1px solid #3f3f3f; box-shadow: inset 1px 0 #6b6b6b; background: linear-gradient(#606060, #5a5a5a 78%, #474747 79%, #4e4e4e); }
.panel .body { display: flex; height: 66px; padding-top: 4px; }
.panel h2 { position: relative; height: 19px; display: flex; gap: 6px; align-items: center; justify-content: center; font-size: 11px; }
.launch { position: absolute; right: 3px; top: 4px; display: flex; }
.launch svg { width: 10px; height: 10px; }
.big { flex: none; width: 35px; display: flex; flex-direction: column; align-items: center; line-height: 15px; color: #eee; }
.big svg { width: 28px; height: 28px; margin: 1px 0 2px; }
.big .caret { margin-top: 3px; }
.letter { font: 300 30px/28px Roboto, sans-serif; height: 28px; margin: 1px 0 2px; color: #fff; }
.col { display: flex; flex-direction: column; gap: 1px; }
.grow { flex: 1; min-width: 0; }
.sm { height: 20px; display: flex; align-items: center; gap: 3px; text-align: left; }
.sm .caret { margin-left: 6px; }
.p-draw { width: 184px; }
.p-draw .body { padding-left: 2px; }
.p-draw .col { padding-left: 5px; }
.p-draw .sm .caret { margin-left: 3px; }
.p-modify { width: 194px; }
.p-modify .body { padding-left: 4px; gap: 9px; }
.p-anno { width: 135px; }
.p-anno .body { padding-left: 4px; }
.p-anno .col { padding-left: 3px; }
.p-layer { width: 217px; }
.p-layer .body { padding: 4px 2px 0 0; }
.row { height: 20px; display: flex; align-items: center; gap: 4px; padding-left: 4px; }
.row button { display: flex; align-items: center; gap: 3px; }
.p-block { width: 116px; }
.p-block .col { padding-left: 3px; }
.p-prop { width: 210px; }
.p-prop .body { padding-right: 2px; }
.p-prop .icons { width: 18px; padding: 2px 0; gap: 5px; }
.p-group { width: 60px; }
.p-util { width: 65px; }
.p-util .body { padding-left: 2px; }
.p-group .col { padding-left: 1px; }
.p-util .col { padding-left: 6px; }
.p-group .sm { width: 20px; justify-content: center; }
.sm.active { background: #5877ad; border: 1px solid #86a4d8; }
.p-clip { width: 90px; flex: 1 0 90px; }
.p-clip .body { padding-left: 4px; }
.p-clip h2 { justify-content: flex-start; padding-left: 16px; }
.combo { height: 20px; display: flex; align-items: center; padding: 0 3px 0 2px; background: linear-gradient(#5f5f5f, #505050); border: 1px solid #353535; }
.combo select { flex: 1; min-width: 0; color: #eee; }
.swatch { flex: none; width: 14px; height: 14px; background: #6f6f6f; border: 1px solid #999; margin: 0 7px 0 8px; }
.small-sw { width: 12px; height: 12px; margin: 0 5px 0 4px; border-color: #222; outline: 1px solid #888; outline-offset: -2px; }
.rule { flex: none; width: 54px; height: 1px; background: #eee; margin: 0 2px 0 1px; }

/* main */
main { flex: 1; min-height: 0; display: flex; }
aside { width: 92px; flex: none; display: flex; flex-direction: column; border-right: 1px solid #555; border-bottom: 3px solid #666; background: #f0f0f0; color: #111; }
.side-title { flex: none; height: 25px; padding-left: 13px; font-size: 11px; line-height: 21px; background: linear-gradient(#575757, #626262); color: #e0e0e0; }
.side-body { flex: 1; padding-top: 2px; }
.side-body ul { display: grid; grid-auto-rows: 1fr; }
.side-body li { display: flex; align-items: center; min-height: 0; padding-left: 24px; }
.side-body li button { width: 44px; display: flex; justify-content: space-between; line-height: 15px; }
.side-body b { font-weight: 400; }
.tree li::before { content: ""; width: 0; margin: 0 13px 0 -17px; border: 4px solid transparent; border-left-color: #2b5f92; border-right: 0; }
.side-body .tree .open { padding-left: 26px; }
.tree .open::before { margin: 0 13px 0 -21px; border: 4px solid transparent; border-top-color: #2b5f92; border-bottom: 0; }
.side-body .tree .open button { margin-left: -2px; }
.tools li { gap: 7px; }
.side-body .tools li { padding-left: 2px; }
.tools svg { width: 15px; height: 15px; }
.t-a { font: 700 12px "Liberation Sans", sans-serif; }
.t-ab { font: 700 8px "Liberation Sans", sans-serif; }
.g11 { height: 173px; border-bottom: 2px solid #888; }
.g7 { height: 114px; padding: 1px 0 3px; border-bottom: 1px solid #aaa; }
.g4 { height: 67px; padding: 2px 0; border-bottom: 1px solid #aaa; }
.g3 { height: 52px; padding: 2px 0; border-bottom: 1px solid #aaa; }
.g2 { height: 35px; padding: 2px 0; }
.g10 { height: 156px; }

.work { flex: 1; min-width: 0; display: flex; flex-direction: column; }
.docs { flex: none; height: 17px; display: flex; background: #f0f0f0; color: #111; font: 10px/15px "Liberation Mono", "Noto Sans CJK SC", monospace; border-bottom: 1px solid #fff; }
.docs button { padding: 0 7px; border-right: 1px solid #666; border-bottom: 1px solid #aaa; }
.docs .on { background: #f9e4ee; color: #4a2a9a; }
.canvas { flex: 1; position: relative; overflow: hidden; background: #000; }
.drawing { position: absolute; inset: 0; width: 100%; height: 100%; }
.axis { stroke: #5c50a8; fill: none; }
.green { stroke: #2c9a35; fill: none; stroke-width: 1.3; }
.coord text { font: 100 33px Roboto, sans-serif; fill: #f0f0f0; text-anchor: end; }
.ucs { stroke: #ddd; fill: none; }
.view-label { position: absolute; left: 3px; top: 4px; color: #ddd; }
.tip { position: absolute; left: 555px; top: 512px; width: 111px; height: 98px; padding: 7px 0 0 7px; background: #f0f0f7; border: 1px solid #bbb; color: #555; }
.tip h3 { font-size: 11px; font-weight: 500; color: #333; margin-bottom: 5px; }
.tip dl { display: grid; grid-template-columns: 31px 1fr; line-height: 19px; padding-left: 2px; white-space: nowrap; }
.chip { display: inline-block; width: 9px; height: 9px; background: #777; border: 1px solid #333; margin-right: 3px; }
.history { position: absolute; left: 765px; bottom: 26px; display: grid; gap: 4px; font: 11px/13px "Liberation Mono", "Noto Sans CJK SC", monospace; color: #ccc; }
.history p { width: 200px; overflow: hidden; white-space: nowrap; padding-left: 2px; background: rgba(90, 90, 90, .85); }
.history .old { color: #aaa; background: rgba(80, 80, 80, .8); }
.history .now { color: #eee; }
.command { position: absolute; left: 400px; right: 0; bottom: 0; height: 23px; display: flex; align-items: center; background: rgba(255, 255, 255, .7); border-radius: 3px 0 0 0; overflow: hidden; }
.cmd-left { width: 46px; height: 23px; display: flex; align-items: center; gap: 2px; padding: 0 3px; background: #484848; margin-right: 3px; }
.grip { width: 5px; height: 15px; background: repeating-linear-gradient(#999 0 1px, #555 1px 2px); }
.command .dark { border-top-color: #666; }
.command input { flex: 1; padding-left: 8px; font-style: italic; }
.command input::placeholder { color: #6a6a6a; }

/* status bar */
footer { flex: none; height: 22px; display: flex; background: #3a3a3a; }
.layouts { display: flex; height: 16px; padding-left: 12px; gap: 3px; color: #aaa; }
.layouts button { padding: 0 8px; background: #505050; border-radius: 0 0 6px 6px; line-height: 15px; }
.layouts .on { background: #808080; color: #fff; font-weight: 700; }
.layouts .plus { padding: 0 7px; color: #ddd; }
.status { margin-left: auto; padding-right: 200px; display: flex; background: #505050; color: #eee; }
.status > * { display: flex; align-items: center; justify-content: center; border-left: 1px solid transparent; overflow: hidden; }
.status > .sep { border-color: #707070; }
.w62 { width: 62px; gap: 3px; }
.pos { width: 184px; justify-content: flex-end; padding-right: 6px; font-size: 10px; font-weight: 500; color: #fff; }
.w25 { width: 25px; }
.w21 { width: 21px; }
.w33 { width: 33px; gap: 6px; }
.w36 { width: 36px; gap: 8px; }
.status > .pos, .status > .w25 { border-color: #707070; }

.brand { position: absolute; right: 0; bottom: 0; width: 200px; height: 95px; display: flex; align-items: center; gap: 8px; padding: 0 0 0 12px; background: #222e55; color: #e4e4e6; white-space: nowrap; }
.brand svg { width: 44px; height: 60px; }
.b1 { font: 500 33px/34px Inter, sans-serif; }
.b1 span { font: 700 27px/34px "Noto Sans CJK SC", sans-serif; }
.b2 { font: 400 24px/26px Inter, sans-serif; }
```
